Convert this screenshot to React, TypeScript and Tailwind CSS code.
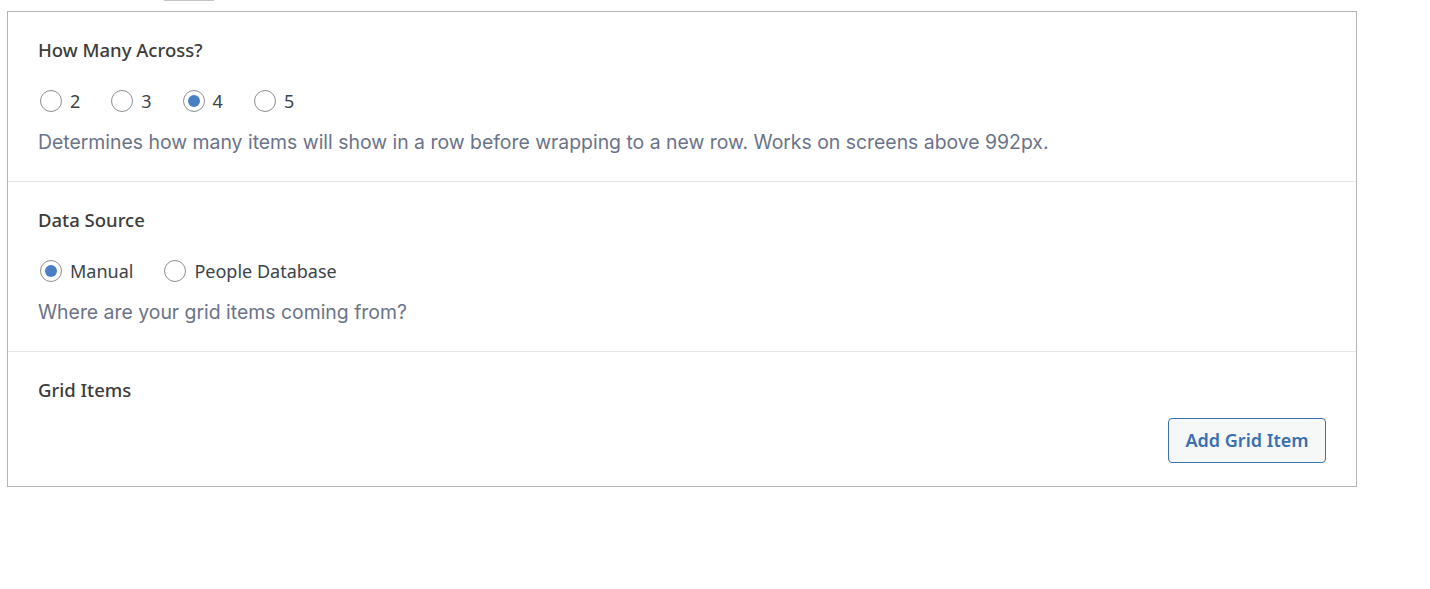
import { useState } from 'react';

type Option = { value: string; label: string };

const RadioGroup = ({ options, value, onChange }: { options: Option[]; value: string; onChange: (v: string) => void }) => {
  return (
    <div className="flex items-center gap-[31px] h-[22px] pl-[2px]">
      {options.map((opt) => (
        <label key={opt.value} className="flex items-center gap-[8px] cursor-pointer" onClick={() => onChange(opt.value)}>
          <span className="w-[22px] h-[22px] rounded-full border border-[#8c8f94] bg-white flex items-center justify-center">
            {value === opt.value && <span className="w-[12px] h-[12px] rounded-full bg-[#4a7fc4]" />}
          </span>
          <span className="text-[18px] leading-[22px] text-[#3c434a] font-['Noto_Sans',sans-serif]">{opt.label}</span>
        </label>
      ))}
    </div>
  );
};

const App = () => {
  const [across, setAcross] = useState("4");
  const [source, setSource] = useState("manual");

  return (
    <div className="bg-white min-h-[589px] pl-[7px] w-[1430px]">
      <div className="ml-[157px] w-[50px] h-[1px] bg-[#c3c4c7]" />
      <div className="mt-[10px] w-[1350px] border border-[#b4b6b9] bg-white">
        <div className="pt-[26px] pb-[25px] px-[30px] border-b border-[#e6e7e8]">
          <h4 className="h-[24px] leading-[24px] text-[18.5px] font-medium text-[#3c3c3c] font-['Noto_Sans',sans-serif]">
            How Many Across?
          </h4>
          <div className="mt-[28px]">
            <RadioGroup
              options={[{ value: "2", label: "2" }, { value: "3", label: "3" }, { value: "4", label: "4" }, { value: "5", label: "5" }]}
              value={across}
              onChange={setAcross}
            />
          </div>
          <p className="mt-[16px] leading-[28px] text-[19.4px] text-[#6b7388] font-['Inter',sans-serif]">
            Determines how many items will show in a row before wrapping to a new row. Works on screens above 992px.
          </p>
        </div>
        <div className="pt-[26px] pb-[25px] px-[30px] border-b border-[#e6e7e8]">
          <h4 className="h-[24px] leading-[24px] text-[18.5px] font-medium text-[#3c3c3c] font-['Noto_Sans',sans-serif]">
            Data Source
          </h4>
          <div className="mt-[28px]">
            <RadioGroup
              options={[{ value: "manual", label: "Manual" }, { value: "people", label: "People Database" }]}
              value={source}
              onChange={setSource}
            />
          </div>
          <p className="mt-[16px] leading-[28px] text-[19.4px] text-[#6b7388] font-['Inter',sans-serif]">
            Where are your grid items coming from?
          </p>
        </div>
        <div className="pt-[26px] pb-[23px] px-[30px]">
          <h4 className="h-[24px] leading-[24px] text-[18.5px] font-medium text-[#3c3c3c] font-['Noto_Sans',sans-serif]">
            Grid Items
          </h4>
          <div className="mt-[16px] flex justify-end">
            <button className="w-[158px] h-[45px] rounded-[4px] border border-[#3a6fb0] bg-[#f6f7f7] text-[#3a6fb0] text-[18px] font-semibold font-['Noto_Sans',sans-serif]">
              Add Grid Item
            </button>
          </div>
        </div>
      </div>
    </div>
  );
};

export default App;
